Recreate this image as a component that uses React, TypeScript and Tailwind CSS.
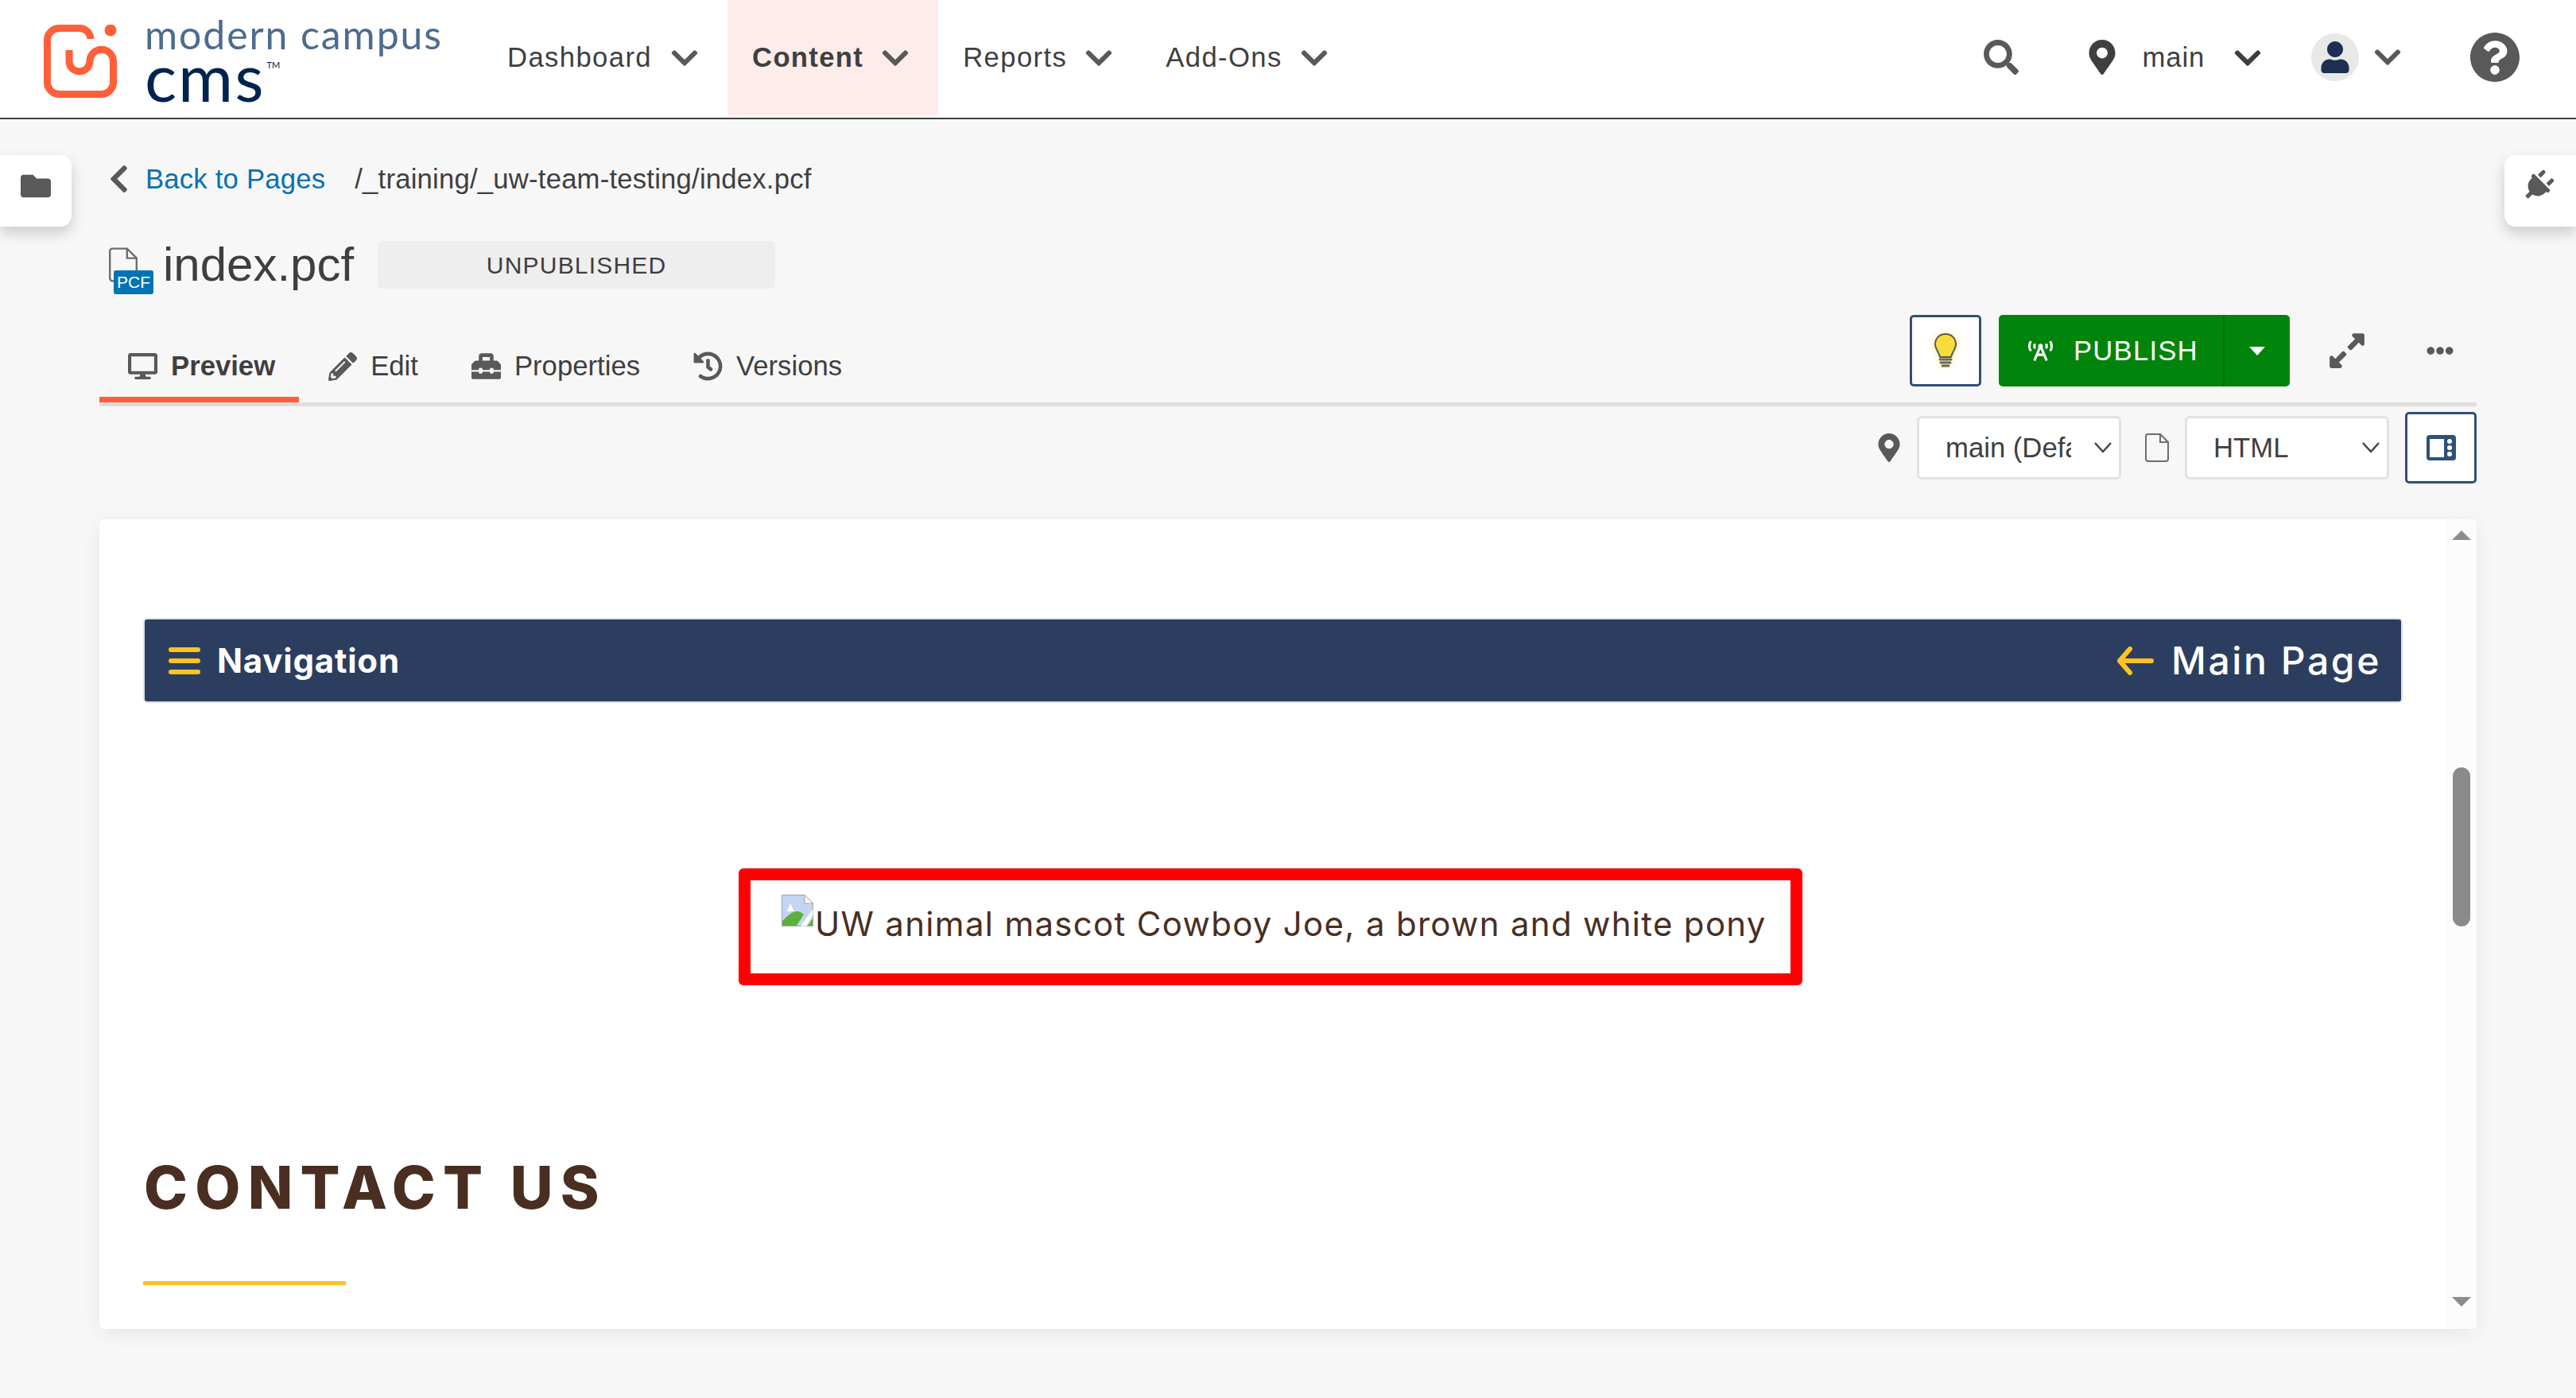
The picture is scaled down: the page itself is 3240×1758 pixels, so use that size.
import { ReactNode } from "react";
import {
  FaChevronDown,
  FaChevronLeft,
  FaDesktop,
  FaEllipsisH,
  FaExpandAlt,
  FaFolder,
  FaHistory,
  FaMapMarkerAlt,
  FaPencilAlt,
  FaPlug,
  FaQuestionCircle,
  FaSearch,
  FaToolbox,
  FaUser,
  FaBroadcastTower,
} from "react-icons/fa";

function Logo() {
  return (
    <div className="flex items-start w-[330px] shrink-0 ml-[55px]">
      <svg width="92" height="92" viewBox="55 31 92 92" className="shrink-0 mt-[31px]">
        <path
          d="M87 63 V77 A13 13 0 0 0 113 77 A14.75 14.75 0 0 1 142.5 77 V103 A15 15 0 0 1 127 118.5 H75 A15 15 0 0 1 59.5 103 V51 A15 15 0 0 1 75 35.5 H100 A14 14 0 0 1 114 49"
          fill="none"
          stroke="#ff5f39"
          strokeWidth="9"
        />
        <circle cx="139" cy="38" r="7.5" fill="#ff5f39" />
      </svg>
      <div className="ml-[37px] font-['Lato',sans-serif] whitespace-nowrap">
        <div className="text-[50px] leading-[50px] mt-[18px] -ml-[2px] text-[#4e6b8f] font-normal tracking-[1.9px]">modern campus</div>
        <div className="flex items-start">
          <span className="text-[84px] leading-[56px] -ml-[2px] text-[#02234f] font-normal tracking-[2px]">cms</span>
          <span className="text-[11px] leading-[12px] mt-[8px] ml-[2px] text-[#02234f]">TM</span>
        </div>
      </div>
    </div>
  );
}

function NavItem({ label, active, chevronGap }: { label: string; active?: boolean; chevronGap: string }) {
  return (
    <div
      className={`flex items-center h-[145px] text-[34.7px] text-[#3f3f3f] ${
        active ? "bg-[#fdecea] font-bold pl-[31px] pr-[35px] tracking-[1.3px]" : "tracking-[1.37px]"
      }`}
    >
      <span>{label}</span>
      <FaChevronDown size={38} className={`${chevronGap} text-[#595959]`} />
    </div>
  );
}

function Tab({ icon, label, active, className }: { icon: ReactNode; label: string; active?: boolean; className: string }) {
  return (
    <div
      className={`flex items-center h-[96px] pt-[12px] border-b-[7px] gap-[17px] text-[34.7px] text-[#3f3f3f] ${
        active ? "border-[#ff5f39] font-bold" : "border-transparent"
      } ${className}`}
    >
      <span className="text-[#595959] flex">{icon}</span>
      <span>{label}</span>
    </div>
  );
}

function Select({ label, inner }: { label: string; inner: string }) {
  return (
    <div className="flex items-center justify-between w-[257px] h-[80px] bg-white border-[3px] border-[#e2e2e2] rounded-[6px] pl-[33px] pr-[8px] text-[34.7px] text-[#3f3f3f]">
      <span className={`${inner} overflow-hidden whitespace-nowrap`}>{label}</span>
      <svg width="24" height="14" viewBox="0 0 24 14" fill="none" stroke="#444" strokeWidth="2.5">
        <path d="M2 1 L12 12 L22 1" />
      </svg>
    </div>
  );
}

function FileOutline({ className }: { className: string }) {
  return (
    <svg viewBox="0 0 30 36" fill="none" stroke="#6d6d6d" strokeWidth="2" className={className}>
      <path d="M3.5 1 H19 L29 11 V32 A3 3 0 0 1 26 35 H4 A3 3 0 0 1 1 32 V3.5 A2.5 2.5 0 0 1 3.5 1 Z" />
      <path d="M19 1 V11 H29" />
    </svg>
  );
}

function BrokenImage() {
  return (
    <svg width="40" height="40" viewBox="0 0 40 40" className="shrink-0 self-start mt-[18px]">
      <path d="M0.5 0.5 H29 L39.5 11 V39.5 H0.5 Z" fill="#c3d5f2" stroke="#a3a3a3" />
      <path d="M29 0.5 V11 H39.5 Z" fill="#fff" stroke="#a3a3a3" />
      <path d="M7 21 L11 11 L16 21 Z" fill="#fff" />
      <path d="M1 39 V33 C8 26 16 18 24 22 L28 25 L19 39 Z" fill="#5cb13a" />
      <path d="M24 39.5 L39.5 18 V26 L31 39.5 Z" fill="#fff" />
      <path d="M33 39 L39 30 V39 Z" fill="#5cb13a" />
    </svg>
  );
}

export default function App() {
  return (
    <div className="relative h-[1758px] overflow-hidden bg-[#f7f7f7] font-['Liberation_Sans',Arial,sans-serif]">
      <header className="flex h-[150px] bg-white border-b-2 border-[#3f3f3f]">
        <Logo />
        <nav className="flex ml-[253px]">
          <NavItem label="Dashboard" chevronGap="ml-[22px]" />
          <div className="ml-[35px]">
            <NavItem label="Content" active chevronGap="ml-[21px]" />
          </div>
          <div className="ml-[31px]">
            <NavItem label="Reports" chevronGap="ml-[21px]" />
          </div>
          <div className="ml-[65px]">
            <NavItem label="Add-Ons" chevronGap="ml-[21px]" />
          </div>
        </nav>
        <div className="ml-auto flex items-center h-[145px] text-[#3f3f3f]">
          <FaSearch size={44} className="text-[#595959] -mt-[2px]" />
          <FaMapMarkerAlt size={44} className="ml-[83px] -mt-[2px]" />
          <span className="ml-[29px] text-[34.7px] tracking-[.8px]">main</span>
          <FaChevronDown size={38} className="ml-[35px]" />
          <div className="ml-[61px] w-[60px] h-[60px] rounded-full bg-[#e8e8e8] flex items-center justify-center -mt-[1px]">
            <FaUser size={40} className="text-[#1d3052]" />
          </div>
          <FaChevronDown size={38} className="ml-[17px] text-[#595959] -mt-[2px]" />
          <FaQuestionCircle size={64} className="ml-[84px] mr-[70px] text-[#595959] -mt-[1px]" />
        </div>
      </header>

      <div className="absolute left-0 top-[195px] w-[90px] h-[90px] bg-white rounded-r-[14px] shadow-[0_8px_18px_rgba(0,0,0,0.18)] flex items-start pt-[20px] pl-[26px]">
        <FaFolder size={38} className="text-[#595959]" />
      </div>
      <div className="absolute right-0 top-[195px] w-[90px] h-[90px] bg-white rounded-l-[14px] shadow-[0_8px_18px_rgba(0,0,0,0.18)] flex items-start pt-[19px] pl-[22px]">
        <FaPlug size={40} className="rotate-45 text-[#595959]" />
      </div>

      <main className="px-[125px]">
        <div className="flex items-center h-[40px] mt-[55px] pl-[12px] text-[34.7px] tracking-[.2px] text-[#3f3f3f]">
          <FaChevronLeft size={40} className="w-[25px] text-[#595959]" />
          <span className="ml-[21px] text-[#0072b1]">Back to Pages</span>
          <span className="ml-[37px]">/_training/_uw-team-testing/index.pcf</span>
        </div>

        <div className="flex items-center h-[60px] mt-[58px] pl-[12px] text-[#3f3f3f]">
          <div className="relative w-[56px] h-[60px] mt-[16px]">
            <FileOutline className="w-[36px] h-[44px]" />
            <span className="absolute left-[6px] top-[29px] w-[50px] h-[30px] bg-[#0074b3] rounded-[3px] text-white text-[21px] leading-[30px] text-center">
              PCF
            </span>
          </div>
          <span className="ml-[12px] text-[60px] leading-[60px]">index.pcf</span>
          <span className="ml-[30px] w-[500px] h-[60px] bg-[#eeeeee] rounded-[6px] flex items-center justify-center text-[30px] tracking-[1.2px]">
            UNPUBLISHED
          </span>
        </div>

        <div className="flex justify-between items-start h-[115px] mt-[33px] border-b-[5px] border-[#dedede]">
          <div className="flex mt-[14px]">
            <Tab icon={<FaDesktop size={37} />} label="Preview" active className="pl-[36px] pr-[30px]" />
            <Tab icon={<FaPencilAlt size={36} />} label="Edit" className="ml-[37px]" />
            <Tab icon={<FaToolbox size={37} />} label="Properties" className="ml-[67px]" />
            <Tab icon={<FaHistory size={37} />} label="Versions" className="ml-[67px]" />
          </div>
          <div className="flex items-center">
            <div className="w-[90px] h-[90px] bg-white border-[3px] border-[#2f5079] rounded-[5px] flex items-center justify-center">
              <svg width="34" height="46" viewBox="0 0 34 46" className="drop-shadow-[0_0_4px_rgba(247,220,58,0.6)]">
                <path
                  d="M17 2 C9 2 4 8 4 15 C4 21 9 25 10 31 H24 C25 25 30 21 30 15 C30 8 25 2 17 2 Z"
                  fill="#f7dc3a"
                  stroke="#5a5a5a"
                  strokeWidth="2"
                />
                <path d="M10 34 H24 M11 38 H23 M13 42 H21" stroke="#6a6a5a" strokeWidth="3" strokeLinecap="round" />
              </svg>
            </div>
            <div className="ml-[22px] flex h-[90px] w-[366px] bg-[#00840b] rounded-[5px] text-white">
              <div className="flex items-center w-[284px] border-r-2 border-[#00700a] pl-[37px]">
                <FaBroadcastTower size={31} />
                <span className="ml-[26px] text-[34.7px] tracking-[1.2px]">PUBLISH</span>
              </div>
              <div className="flex-1 flex items-center justify-center">
                <svg width="20" height="11" viewBox="0 0 20 11">
                  <path d="M0 0 H20 L10 11 Z" fill="#fff" />
                </svg>
              </div>
            </div>
            <FaExpandAlt size={50} className="ml-[47px] text-[#595959]" />
            <FaEllipsisH size={34} className="ml-[75px] mr-[29px] text-[#595959]" />
          </div>
        </div>

        <div className="flex justify-end items-center h-[90px] mt-[7px]">
          <FaMapMarkerAlt size={36} className="text-[#595959] mr-[17px]" />
          <Select label="main (Default)" inner="w-[158px]" />
          <FileOutline className="w-[30px] h-[36px] ml-[30px] mr-[20px]" />
          <Select label="HTML" inner="w-[158px]" />
          <div className="ml-[20px] w-[90px] h-[90px] border-[3px] border-[#2f5079] rounded-[5px] bg-white flex items-center justify-center">
            <svg width="37" height="32" viewBox="0 0 37 32">
              <rect width="37" height="32" rx="4" fill="#2f5079" />
              <rect x="4" y="5" width="18" height="23" fill="#fff" />
              <circle cx="29" cy="8" r="3" fill="#fff" />
              <circle cx="29" cy="16" r="3" fill="#fff" />
              <circle cx="29" cy="24" r="3" fill="#fff" />
            </svg>
          </div>
        </div>

        <div className="flex h-[1018px] mt-[45px] bg-white rounded-[6px] shadow-[0_6px_24px_rgba(0,0,0,0.07)] overflow-hidden">
          <div className="flex-1 px-[57px] pt-[126px]">
            <div className="flex items-center justify-between h-[103px] bg-[#2c3e5f] shadow-[0_0_0_2px_#dfe1e8] rounded-[3px] text-white font-['Inter',sans-serif]">
              <div className="flex items-center pl-[30px]">
                <svg width="40" height="34" viewBox="0 0 40 34" fill="#fdc323">
                  <rect width="40" height="6" rx="3" />
                  <rect y="14" width="40" height="6" rx="3" />
                  <rect y="28" width="40" height="6" rx="3" />
                </svg>
                <span className="ml-[21px] text-[42px] font-bold tracking-[.8px]">Navigation</span>
              </div>
              <div className="flex items-center pr-[25px]">
                <svg width="46" height="36" viewBox="0 0 46 36" fill="none" stroke="#fdc323" strokeWidth="6" strokeLinecap="round" strokeLinejoin="round">
                  <path d="M43 18 H3 M16 3 L3 18 L16 33" />
                </svg>
                <span className="ml-[22px] text-[48px] font-medium tracking-[2.6px]">Main Page</span>
              </div>
            </div>

            <div className="flex items-center ml-[747px] mt-[210px] w-[1338px] h-[147px] border-[15px] border-[#ff0000] rounded-[6px] pl-[39px]">
              <BrokenImage />
              <span className="ml-[2px] -mt-[8px] text-[42px] text-[#4a2e22] font-['Inter',sans-serif] whitespace-nowrap tracking-[1.3px]">
                UW animal mascot Cowboy Joe, a brown and white pony
              </span>
            </div>

            <h2 className="mt-[214px] -ml-[1px] text-[74px] leading-[80px] font-extrabold tracking-[9.2px] text-[#4a2e22] font-['Inter',sans-serif]">
              CONTACT US
            </h2>
            <div className="mt-[78px] -ml-[2px] w-[255px] h-[5px] bg-[#fdc323]" />
          </div>

          <div className="w-[38px] shrink-0 bg-[#fcfcfc] flex flex-col items-center pt-[14px]">
            <svg width="24" height="12" viewBox="0 0 24 12">
              <path d="M12 0 L24 12 H0 Z" fill="#8c8c8c" />
            </svg>
            <div className="mt-[286px] w-[22px] h-[200px] rounded-full bg-[#8a8a8a]" />
            <svg width="24" height="12" viewBox="0 0 24 12" className="mt-[466px]">
              <path d="M0 0 H24 L12 12 Z" fill="#8c8c8c" />
            </svg>
          </div>
        </div>
      </main>
    </div>
  );
}
